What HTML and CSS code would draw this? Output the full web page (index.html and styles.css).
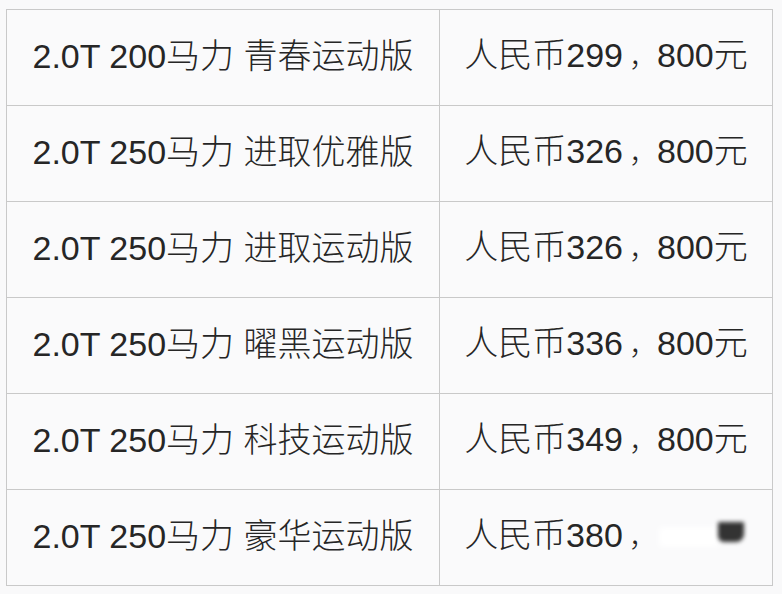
FILE: index.html
```html
<!DOCTYPE html>
<html lang="zh">
<head>
<meta charset="utf-8">
<link rel="stylesheet" href="styles.css">
</head>
<body>
<table class="price-table">
  <tr><td class="model">2.0T 200马力 青春运动版</td><td class="price">人民币299<span class="comma">，</span>800元</td></tr>
  <tr><td class="model">2.0T 250马力 进取优雅版</td><td class="price">人民币326<span class="comma">，</span>800元</td></tr>
  <tr><td class="model">2.0T 250马力 进取运动版</td><td class="price">人民币326<span class="comma">，</span>800元</td></tr>
  <tr><td class="model">2.0T 250马力 曜黑运动版</td><td class="price">人民币336<span class="comma">，</span>800元</td></tr>
  <tr><td class="model">2.0T 250马力 科技运动版</td><td class="price">人民币349<span class="comma">，</span>800元</td></tr>
  <tr><td class="model">2.0T 250马力 豪华运动版</td><td class="price">人民币380<span class="comma">，</span><span class="mark"><span class="mark-light"></span><span class="mark-dark"></span></span></td></tr>
</table>
</body>
</html>
```

FILE: styles.css
```css
html, body {
  margin: 0;
  padding: 0;
  background: #f9f9fa;
}
body {
  padding: 9px 0 0 6px;
  font-family: "Liberation Sans", "Noto Sans CJK SC", sans-serif;
  color: #262626;
}
.price-table {
  border-collapse: collapse;
  width: 767px;
  table-layout: fixed;
  background: #fafafb;
}
.price-table td {
  border: 1px solid #c9c9c9;
  height: 92px;
  padding: 0 0 3px;
  text-align: center;
  font-size: 34px;
  font-weight: 300;
  line-height: 40px;
  white-space: nowrap;
}
.price-table td.model {
  width: 432px;
}
.comma {
  font-size: 28px;
  padding-left: 6px;
}
.mark {
  display: inline-block;
  position: relative;
  width: 91px;
  height: 30px;
  vertical-align: -4px;
}
.mark-light {
  position: absolute;
  left: 2px;
  top: 6px;
  width: 60px;
  height: 20px;
  background: #ffffff;
  filter: blur(3px);
}
.mark-dark {
  position: absolute;
  left: 61px;
  top: 1px;
  width: 26px;
  height: 20px;
  background: #333;
  border-radius: 1px 1px 8px 6px;
  filter: blur(2px);
}
```
